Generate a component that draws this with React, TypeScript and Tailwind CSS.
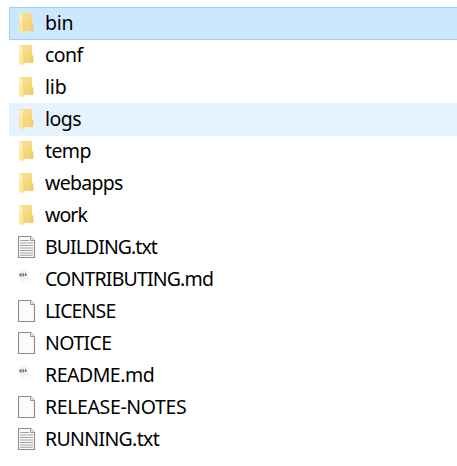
import React from "react";

type Kind = "folder" | "text" | "markdown" | "blank";

interface Entry {
  name: string;
  kind: Kind;
  spacing: string;
  state?: "selected" | "hover";
}

const entries: Entry[] = [
  { name: "bin", kind: "folder", spacing: "tracking-[-0.3px]", state: "selected" },
  { name: "conf", kind: "folder", spacing: "tracking-[-0.6px]" },
  { name: "lib", kind: "folder", spacing: "tracking-[-0.2px]" },
  { name: "logs", kind: "folder", spacing: "tracking-[-0.5px]", state: "hover" },
  { name: "temp", kind: "folder", spacing: "tracking-[-0.6px]" },
  { name: "webapps", kind: "folder", spacing: "tracking-[-0.7px]" },
  { name: "work", kind: "folder", spacing: "tracking-[-0.9px]" },
  { name: "BUILDING.txt", kind: "text", spacing: "tracking-[-0.95px]" },
  { name: "CONTRIBUTING.md", kind: "markdown", spacing: "tracking-[-0.82px]" },
  { name: "LICENSE", kind: "blank", spacing: "tracking-[-0.85px]" },
  { name: "NOTICE", kind: "blank", spacing: "tracking-[-0.6px]" },
  { name: "README.md", kind: "markdown", spacing: "tracking-[-0.5px]" },
  { name: "RELEASE-NOTES", kind: "blank", spacing: "tracking-[-0.38px]" },
  { name: "RUNNING.txt", kind: "text", spacing: "tracking-[-0.65px]" },
];

function FolderIcon() {
  return (
    <svg width="18" height="24" viewBox="0 0 18 24" aria-hidden="true">
      <defs>
        <linearGradient id="back" x1="0" y1="0" x2="1" y2="1">
          <stop offset="0" stopColor="#fae29a" />
          <stop offset="1" stopColor="#f5cf68" />
        </linearGradient>
        <linearGradient id="flap" x1="0" y1="0" x2="0" y2="1">
          <stop offset="0" stopColor="#fff0bf" />
          <stop offset="1" stopColor="#ffe08b" />
        </linearGradient>
      </defs>
      <path d="M1.2 1H14V11L15.2 12V19H1.2Z" fill="url(#back)" />
      <path d="M13 11.5L14 11L15.2 12V19H13Z" fill="#f2cb65" />
      <path d="M1.2 1.2L5.5 4V22L1.2 19.5Z" fill="url(#flap)" />
      <path d="M5.5 4.5V19" stroke="#edc667" strokeWidth="0.5" />
    </svg>
  );
}

function PageIcon({ lines }: { lines: boolean }) {
  return (
    <svg width="18" height="24" viewBox="0 0 18 24" aria-hidden="true">
      <path d="M0.5 0.5H12.5L16.5 4.5V21.5H0.5Z" fill="#fafbfc" stroke="#8d8d8d" strokeWidth="1.15" />
      <path d="M12.5 0.5V4.5H16.5" fill="#f0f0f0" stroke="#999999" />
      {lines && (
        <path
          d="M2 4.5H11M2 7H15M2 9.5H15M2 12H15M2 14.5H15M2 17H15M2 19.3H15"
          stroke="#a0a0a0"
        />
      )}
    </svg>
  );
}

function MarkdownIcon() {
  return (
    <svg width="18" height="24" viewBox="0 0 18 24" aria-hidden="true">
      <path d="M0 2L9.5 1L11.5 13L1.5 14.5Z" fill="#f7f7f7" />
      <path d="M1.2 5.6L4.5 5.2V8.3L1.6 8.8Z" fill="#8b8b8b" />
      <path d="M5.5 5.2V8.5M7.7 4.7V8.2M6.5 7L9 6.8" stroke="#707070" strokeWidth="1" />
      <path d="M3 11.5L9.5 10.5" stroke="#ededed" />
    </svg>
  );
}

function EntryIcon({ kind }: { kind: Kind }) {
  if (kind === "folder") return <FolderIcon />;
  if (kind === "markdown") return <MarkdownIcon />;
  return <PageIcon lines={kind === "text"} />;
}

function Row({ entry }: { entry: Entry }) {
  const tone =
    entry.state === "selected"
      ? "border-[#99d1ff] bg-[#cce8ff]"
      : entry.state === "hover"
        ? "border-[#e5f3ff] bg-[#e5f3ff]"
        : "border-transparent";
  return (
    <li className={`-mb-px flex h-[33px] items-start border border-r-0 pl-2 pt-1 ${tone}`}>
      <span className="shrink-0">
        <EntryIcon kind={entry.kind} />
      </span>
      <span className={`ml-[9px] whitespace-nowrap leading-[21px] ${entry.spacing}`}>{entry.name}</span>
    </li>
  );
}

export default function App() {
  return (
    <main className="h-[466px] w-full overflow-hidden bg-white pl-[9px] pt-[7px] font-['Noto_Sans',sans-serif] text-[19.5px] text-black">
      <ul>
        {entries.map((entry) => (
          <Row key={entry.name} entry={entry} />
        ))}
      </ul>
    </main>
  );
}
